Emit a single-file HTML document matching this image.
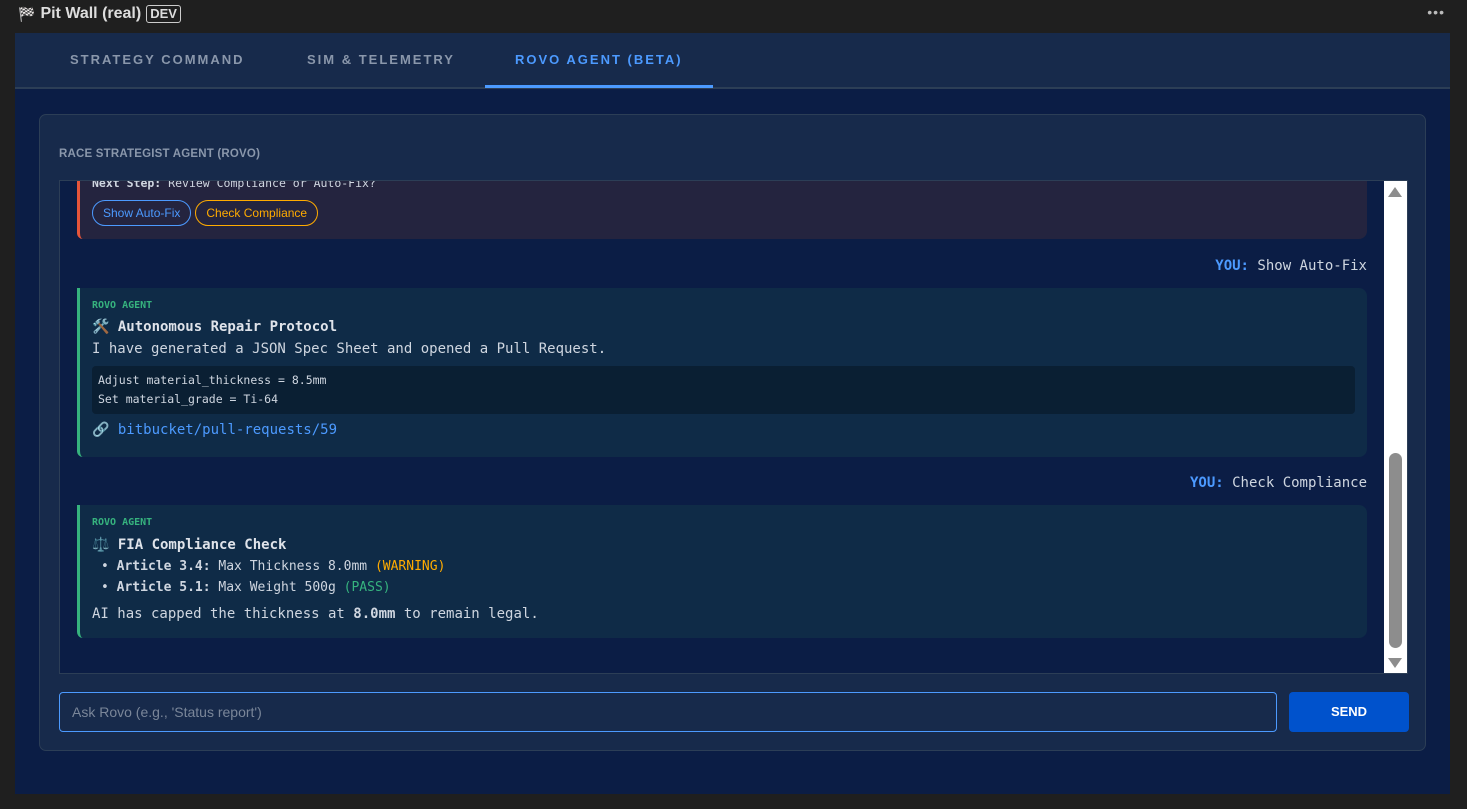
<!DOCTYPE html>
<html><head><meta charset="utf-8"><style>
*{box-sizing:border-box;margin:0;padding:0}
body{width:1467px;height:809px;background:#1f1f1f;font-family:"Liberation Sans",sans-serif;position:relative;overflow:hidden}
.mono{font-family:"DejaVu Sans Mono","Liberation Mono",monospace}
.title{position:absolute;left:18px;top:5px;color:#ddd;font-size:16px;font-weight:bold;display:flex;align-items:center;gap:5px}
.dev{border:1px solid #ccc;border-radius:3px;font-size:13px;padding:0 3px;line-height:16px}
.dots{position:absolute;right:22px;top:4px;color:#bbb;font-size:14px;letter-spacing:1px}
.app{position:absolute;left:15px;top:33px;width:1435px;height:761px;background:#0b1d45}
.tabs{height:56px;background:#172a4b;border-bottom:2px solid #2c3e56;position:relative}
.tab{position:absolute;top:19px;font-size:13px;font-weight:bold;letter-spacing:2px;color:#8a97ab}
.tab.act{color:#4c9aff}
.ul{position:absolute;left:470px;top:52px;width:228px;height:3px;background:#4c9aff}
.card{position:absolute;left:24px;top:81px;width:1387px;height:637px;background:#172a4b;border:1px solid #2c3e56;border-radius:7px}
.ct{position:absolute;left:19px;top:33px;font-size:11.5px;font-weight:bold;color:#8a97ab;letter-spacing:.2px}
.chat{position:absolute;left:19px;top:65px;width:1349px;height:494px;background:#0b1d45;border:1px solid #2c3e56;overflow:hidden}
.sb{position:absolute;right:0;top:0;width:23px;height:494px;background:#fff}
.thumb{position:absolute;left:5px;top:272px;width:13px;height:195px;background:#8d8d8d;border-radius:7px}
.msg{position:absolute;left:17px;width:1290px;border-radius:0 8px 8px 6px;padding:0 12px}
.ag{background:#0f2b47;border-left:3px solid #36b37e}
.lbl{font-size:10px;font-weight:bold;color:#36b37e}
.h{font-size:14px;font-weight:bold;color:#dfe3ea}
.t{font-size:14px;color:#cfd6e0}
.you{position:absolute;right:40px;font-size:14px;color:#cfd6e0}
.you b{color:#4c9aff}
.btn{display:inline-block;border-radius:13px;font-size:12px;padding:5px 10px;margin-right:4px}
.input{position:absolute;left:19px;top:577px;width:1218px;height:40px;border:1px solid #4c9aff;border-radius:4px;background:#172a4b;color:#7a8699;font-size:14px;padding:11px 12px}
.send{position:absolute;left:1249px;top:577px;width:120px;height:40px;border-radius:4px;background:#0052cc;color:#fff;font-weight:bold;font-size:13px;text-align:center;line-height:40px}
</style></head><body>
<div class="title"><span style="font-size:14px">🏁</span>Pit Wall (real) <span class="dev">DEV</span></div>
<div class="dots">•••</div>
<div class="app">
<div class="tabs">
<div class="tab" style="left:55px">STRATEGY COMMAND</div>
<div class="tab" style="left:292px">SIM &amp; TELEMETRY</div>
<div class="tab act" style="left:500px">ROVO AGENT (BETA)</div>
<div class="ul"></div>
</div>
<div class="card">
<div class="ct">RACE STRATEGIST AGENT (ROVO)</div>
<div class="chat mono">
<div class="msg" style="top:-10px;height:68px;background:#24243f;border-left:3px solid #e5553a;padding-top:5px">
<div style="font-size:11.5px;color:#cfd6e0"><b>Next Step:</b> Review Compliance or Auto-Fix?</div>
<div style="margin-top:10px;font-family:'Liberation Sans',sans-serif"><span class="btn" style="border:1px solid #4c9aff;color:#4c9aff">Show Auto-Fix</span><span class="btn" style="border:1px solid #ffab00;color:#ffab00">Check Compliance</span></div>
</div>
<div class="you" style="top:77px"><b>YOU:</b> Show Auto-Fix</div>
<div class="msg ag" style="top:107px;height:169px;padding-top:12px">
<div class="lbl">ROVO AGENT</div>
<div class="h" style="margin-top:8px">🛠️ Autonomous Repair Protocol</div>
<div class="t" style="margin-top:6px">I have generated a JSON Spec Sheet and opened a Pull Request.</div>
<div style="margin-top:9px;background:#0a1f33;border-radius:4px;height:48px;padding:5px 6px;font-size:11.5px;line-height:19px;color:#cfd6e0">Adjust material_thickness = 8.5mm<br>Set material_grade = Ti-64</div>
<div class="t" style="margin-top:8px"><span>🔗</span> <span style="color:#4c9aff">bitbucket/pull-requests/59</span></div>
</div>
<div class="you" style="top:294px"><b>YOU:</b> Check Compliance</div>
<div class="msg ag" style="top:324px;height:133px;padding-top:12px">
<div class="lbl">ROVO AGENT</div>
<div class="h" style="margin-top:9px">⚖️ FIA Compliance Check</div>
<div class="t" style="font-size:13px;margin-top:3px;line-height:21px;padding-left:9px">• <b>Article 3.4:</b> Max Thickness 8.0mm <span style="color:#ffab00">(WARNING)</span><br>• <b>Article 5.1:</b> Max Weight 500g <span style="color:#36b37e">(PASS)</span></div>
<div class="t" style="margin-top:8px">AI has capped the thickness at <b>8.0mm</b> to remain legal.</div>
</div>
<div class="sb"><div style="position:absolute;left:4px;top:6px;width:0;height:0;border-left:7px solid transparent;border-right:7px solid transparent;border-bottom:10px solid #8d8d8d"></div><div class="thumb"></div><div style="position:absolute;left:4px;top:477px;width:0;height:0;border-left:7px solid transparent;border-right:7px solid transparent;border-top:10px solid #8d8d8d"></div></div>
</div>
<div class="input">Ask Rovo (e.g., 'Status report')</div>
<div class="send">SEND</div>
</div>
</div>
</body></html>
